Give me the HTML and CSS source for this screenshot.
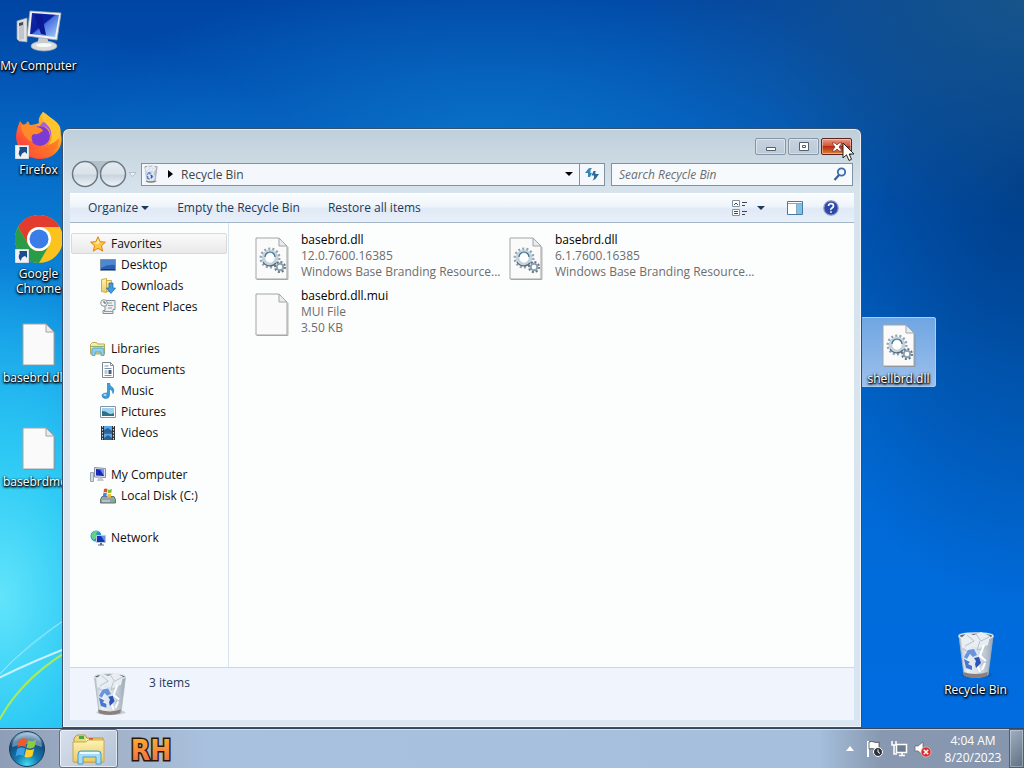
FILE: index.html
```
<!DOCTYPE html>
<html lang="en">
<head>
<meta charset="UTF-8" />
<meta name="viewport" content="width=device-width, initial-scale=1" />
<title>Recycle Bin</title>
<link rel="stylesheet" href="styles.css">
</head>
<body>

  <svg class="sprite" aria-hidden="true">
    <defs>
      <linearGradient id="gScreen" x1="0" y1="0" x2="1" y2="1">
        <stop offset="0" stop-color="#1029a8"/><stop offset=".45" stop-color="#0a1fa0"/><stop offset=".5" stop-color="#4a74e0"/><stop offset="1" stop-color="#a8d0ff"/>
      </linearGradient>
      <linearGradient id="gFox" x1="1" y1="0" x2="0" y2="1">
        <stop offset="0" stop-color="#fff04a"/><stop offset=".4" stop-color="#ff9a1e"/><stop offset=".75" stop-color="#ff4a3a"/><stop offset="1" stop-color="#f0186a"/>
      </linearGradient>
      <linearGradient id="gBin" x1="0" y1="0" x2="1" y2="0">
        <stop offset="0" stop-color="#b4bec8"/><stop offset=".25" stop-color="#eaf1f7"/><stop offset=".65" stop-color="#d0dae4"/><stop offset="1" stop-color="#98a6b4"/>
      </linearGradient>
      <linearGradient id="gFolder" x1="0" y1="0" x2="0" y2="1">
        <stop offset="0" stop-color="#fdf3b4"/><stop offset="1" stop-color="#ebcb60"/>
      </linearGradient>
      <linearGradient id="gLogo" x1="0" y1="0" x2="0" y2="1">
        <stop offset="0" stop-color="#ffb62c"/><stop offset="1" stop-color="#f0604a"/>
      </linearGradient>
      <linearGradient id="gCircle" x1="0" y1="0" x2="0" y2="1">
        <stop offset="0" stop-color="#e4ebf0"/><stop offset=".5" stop-color="#d9e2ea"/><stop offset=".55" stop-color="#c8d3dd"/><stop offset="1" stop-color="#f0f5f9"/>
      </linearGradient>
      <radialGradient id="gOrb" cx=".5" cy=".95" r=".95">
        <stop offset="0" stop-color="#3ee0f4"/><stop offset=".35" stop-color="#147cae"/><stop offset=".75" stop-color="#124a7c"/><stop offset="1" stop-color="#9ec4dc"/>
      </radialGradient>
    </defs>

    <symbol id="computer" viewBox="0 0 48 48">
      <path d="M2 14l10-3v24L4 34l-2-2z" fill="#dfe2e4" stroke="#9aa0a8" stroke-width=".7"/>
      <path d="M4 16l5-2v18l-5 1z" fill="#c2c6ca"/>
      <path d="M4 16l4-1v3l-4 1z" fill="#444c54"/>
      <ellipse cx="29" cy="39" rx="13" ry="5" fill="#d8dcde" stroke="#9da5ab" stroke-width=".7"/>
      <path d="M24 29h8l2 9q-6 3-12 0z" fill="#c6ccd0"/>
      <path d="M15 4l31 2-4 27-30-4z" fill="#f0f2f3" stroke="#a0a8b0" stroke-width=".8"/>
      <path d="M17 6l27 2-4 22-25-3z" fill="url(#gScreen)"/>
      <path d="M19 7l8 1 4 20-5-1z" fill="#0a1a94"/>
      <ellipse cx="29" cy="38" rx="8" ry="2" fill="#f8fafa"/>
    </symbol>

    <symbol id="shortcut" viewBox="0 0 14 14">
      <path d="M0 0h14v14H0z" fill="#eef2f6" stroke="#9aa8b8" stroke-width=".6"/>
      <path d="M5 2h7v7l-2-2q-4 1-4 5-4-3-1-8L4 3z" fill="#1b4f8c"/>
    </symbol>

    <symbol id="firefox" viewBox="0 0 48 48">
      <path d="M28 1c7 4 10 9 12 13 7 7 8 15 5 22C41 44 34 48 25 48 12 48 2 39 1 26 1 20 3 15 5 10l4 5 4-5 2 4c3 0 6-1 9-2-1-4 1-8 4-11z" fill="url(#gFox)"/>
      <circle cx="25" cy="25" r="10" fill="#7b3bd4"/>
      <path d="M24 16c6-3 13 3 11 10 4-7-1-14-7-15z" fill="#a05cf0"/>
      <path d="M6 14c6-2 10 0 14 2 4 0 7 1 8 4-3 1-4 4-9 3-3 1-3 5-1 8-6-2-12-8-12-17z" fill="#ff8a2a"/>
      <path d="M2 28c5 11 21 14 31 5 6-5 6-13 3-19 10 8 10 19 3 26C31 50 5 51 2 28z" fill="#ff6a2c" opacity=".6"/>
      <path d="M28 1c-3 6 2 10 6 15 4 6 4 13-1 18 9-3 15-8 12-18-2-6-10-9-17-15z" fill="#ffc42e"/>
      <use href="#shortcut" x="0" y="34" width="14" height="14"/>
    </symbol>

    <symbol id="chrome" viewBox="0 0 48 48">
      <circle cx="24" cy="24" r="24" fill="#fcc31e"/>
      <path d="M3.200 12A24 24 0 0 1 44.800 12H24A12 12 0 0 0 13.600 30z" fill="#e33b2e"/>
      <path d="M3.200 12A24 24 0 0 0 24 48L34.400 30A12 12 0 0 1 13.600 30z" fill="#2a9c48"/>
      <circle cx="24" cy="24" r="12" fill="#fff"/>
      <circle cx="24" cy="24" r="9.500" fill="#3b7de8"/>
      <use href="#shortcut" x="0" y="34" width="14" height="14"/>
    </symbol>

    <symbol id="file" viewBox="0 0 34 44">
      <path d="M1 1h23l8 8v33H1z" fill="#fafafa" stroke="#a4a4a4"/>
      <path d="M2 42.500h31V10" fill="none" stroke="#8c8c8c" opacity=".6"/>
      <path d="M24 1v8h8z" fill="#e8ecee" stroke="#a4a4a4"/>
    </symbol>

    <symbol id="gearfile" viewBox="0 0 34 44">
      <use href="#file" width="34" height="44"/>
      <circle cx="15" cy="21" r="9" fill="none" stroke="#93a3b0" stroke-width="3" stroke-dasharray="2 2.040"/>
      <circle cx="15" cy="21" r="6.500" fill="#fff" stroke="#c4d2dc" stroke-width="3.600"/>
      <path d="M8 25a8 8 0 0 0 13 1" fill="none" stroke="#56697a" stroke-width="1.300"/>
      <path d="M10 20a5 5 0 0 1 10 0" fill="none" stroke="#3b7492" stroke-width="1.200"/>
      <circle cx="25" cy="30" r="5" fill="none" stroke="#5f7484" stroke-width="2" stroke-dasharray="2 1.900"/>
      <circle cx="25" cy="30" r="3.300" fill="#fff" stroke="#8ba0b0" stroke-width="2"/>
    </symbol>

    <symbol id="bin" viewBox="0 0 40 48">
      <ellipse cx="21" cy="44" rx="16" ry="3" fill="#333" opacity=".2"/>
      <path d="M3 5h34l-5 39q-12 5-24 0z" fill="url(#gBin)" stroke="#a7b3bf" stroke-width=".8"/>
      <path d="M7 41q13 4 25 0l-1 4q-12 4-23 0z" fill="#8c817a"/>
      <ellipse cx="20" cy="5" rx="17" ry="3" fill="#5c6670" stroke="#dce3ea" stroke-width="1.500"/>
      <path d="M5 7l6-5 7 2 7-3 9 4-2 9-9 3-9-2-8 2z" fill="#e9eef2"/>
      <path d="M11 4l7 6-9 5M20 3l5 7 8-4M24 10l-3 9 10-2M26 22l5 7-6 5M7 18l6 3" fill="none" stroke="#b6c0c9"/>
      <path d="M28 14l-4 11 6 5M20 31l4 10M29 32l-3 7" fill="none" stroke="#fff" stroke-width="2"/>
      <path d="M12 19l6-1 3 6-4 2-3-3-3 5-3-2z" fill="#6b94dc"/>
      <path d="M18 27l5-1 2 6-5 5-1-4 1-3z" fill="#2c55bc"/>
      <path d="M8 28l6 3-2 2 4 2v4l-6-2z" fill="#4a76d0"/>
    </symbol>

    <symbol id="star" viewBox="0 0 16 16">
      <path d="M8 .8l2.200 4.900 5.200.5-4 3.600 1.300 5.300L8 12.300l-4.700 2.800 1.300-5.300-4-3.600 5.200-.5z" fill="#ffc843" stroke="#d98216"/>
      <path d="M8 3l1.500 3.600L8 8 4 7l2.500-.5z" fill="#fff0a8"/>
    </symbol>
    <symbol id="desktop" viewBox="0 0 16 16">
      <path d="M.5 2.500h15v11H.5z" fill="#2860b4" stroke="#7e92aa"/>
      <path d="M1 3h14v5Q8 7 1 11z" fill="#4f88d0"/><path d="M1 12h14v1H1z" fill="#16386c"/>
    </symbol>
    <symbol id="downloads" viewBox="0 0 16 16">
      <path d="M1.500 1.500l5-1v14l-5-1zM6.500 2.500h5v11h-5z" fill="url(#gFolder)" stroke="#d0ab48"/>
      <path d="M9 5h4v5h2.500L11 15.500 6.500 10H9z" fill="#3c9de0" stroke="#1c68a8" stroke-width=".7"/>
    </symbol>
    <symbol id="recent" viewBox="0 0 16 16">
      <path d="M5 1.500h10v9h-2v4H3v-3h2z" fill="#eceef0" stroke="#82909c"/>
      <path d="M7 4h5M8 6.500h5M8 9h4M4 12.500h9" stroke="#8ba0b0"/>
      <circle cx="4" cy="4" r="3.300" fill="#f5f6f7" stroke="#89949c"/><path d="M4 2v2h2" fill="none" stroke="#555"/>
    </symbol>
    <symbol id="libraries" viewBox="0 0 16 16">
      <path d="M.5 3.500l2-2h4l1 1.500h7v10H.5z" fill="url(#gFolder)" stroke="#b9a755"/>
      <path d="M1 5.500h14" stroke="#89b66e"/>
      <path d="M2 14.500V9q0-2 2-2h8q2 0 2 2v5.500h-3V11H5v3.500z" fill="#8fd0ee" stroke="#4a9cc4" stroke-width=".8"/>
    </symbol>
    <symbol id="documents" viewBox="0 0 16 16">
      <path d="M2.500.5h8l3 3v12h-11z" fill="#fff" stroke="#7c8894"/>
      <path d="M10.500.5v3h3M4.500 4h4M4.500 6.500h7M4.500 9h3M4.500 11h3M4.500 13.500h7" fill="none" stroke="#8090a0"/>
      <path d="M8.500 8h3v4h-3z" fill="#3d5f88"/>
    </symbol>
    <symbol id="music" viewBox="0 0 16 16">
      <path d="M7.500 0h2q0 3 3 4.500 2.500 2.500.5 6 0-3.500-3.500-4.500V12q0 3.500-4 3.500-3.500-.5-3.500-3T7.500 10z" fill="#3d9cda" stroke="#2274ac" stroke-width=".6"/>
      <ellipse cx="5" cy="12" rx="1.500" ry="1" fill="#b2def8"/>
    </symbol>
    <symbol id="pictures" viewBox="0 0 16 16">
      <path d="M.5 2.500h15v11H.5z" fill="#fff" stroke="#8296a8"/>
      <path d="M2 4h12v8H2z" fill="#9bd2ee"/><path d="M2 7q4 0 6 2t6 0v3H2z" fill="#2e7184"/>
    </symbol>
    <symbol id="videos" viewBox="0 0 16 16">
      <path d="M1 1h14v14H1z" fill="#2e3338"/><path d="M4 1h8v6.500H4zM4 8.500h8V15H4z" fill="#5ba6e6"/>
      <path d="M4 5l4-2 4 3v1.500H4zM4 13l4-3 4 3v2H4z" fill="#2b5f98"/>
      <path d="M2.500 1v14M13.500 1v14" stroke="#dfe5ea" stroke-dasharray="1.500 1.500"/>
    </symbol>
    <symbol id="pc" viewBox="0 0 16 16">
      <path d="M.5 5.500h3v9h-3z" fill="#d4dadf" stroke="#98a2ac"/>
      <path d="M4.500.5l11 1v9l-11-.5z" fill="#dbe0ee" stroke="#8890b0"/>
      <path d="M6 2l8 .7V9L6 8.500z" fill="#1728b4"/><path d="M10 2.500l4 .2V9z" fill="#6f92ec"/>
      <path d="M8 10.500h4l2 3.500H7z" fill="#c6ccd2"/>
    </symbol>
    <symbol id="disk" viewBox="0 0 16 16">
      <path d="M2 8.500h12l1.500 3v3.500H.5v-3.500z" fill="#96a2a8" stroke="#637078"/>
      <path d="M2 13h8" stroke="#d6e0e4"/><path d="M12 12h2v1.500h-2z" fill="#4fd04f"/>
      <path d="M4 1q2-1 3.500 0L7 4.500q-2-1-3.500 0z" fill="#e65228"/><path d="M8.200 1.400Q10 2 12 1l-.6 3.500q-2 1-3.700.3z" fill="#80bd34"/>
      <path d="M3.300 5.300q2-1 3.500 0L6.300 9q-2-1-3.600 0z" fill="#3c88dc"/><path d="M7.600 5.600q1.700.8 3.700-.2L10.800 9q-2 1-3.700.3z" fill="#f8bd28"/>
    </symbol>
    <symbol id="network" viewBox="0 0 16 16">
      <circle cx="6" cy="6" r="5.500" fill="#2696d6"/><path d="M2 3q3-3 6-2L6 4l2 2-4 4q-4-3-2-7z" fill="#6ad084"/>
      <path d="M6.500 5.500h9v7h-9z" fill="#1236b4" stroke="#bcc8e0"/><path d="M11 6h4v6z" fill="#668ee8"/>
      <path d="M10 13h2v1.500h2v1H8v-1h2z" fill="#5a6c84"/>
    </symbol>

    <symbol id="explorer" viewBox="0 0 34 32">
      <path d="M2 5l3-3h8l2 3h16v24H2z" fill="#f0d778" stroke="#b99840"/>
      <path d="M7 3h5v3H7z" fill="#46a84a"/><path d="M14 6h7v3h-7z" fill="#fff"/><path d="M17 5h4v2h-4z" fill="#d85a38"/><path d="M24 7h5v2h-5z" fill="#3f78cc"/>
      <path d="M1 9h13l2-2h16v22H1z" fill="url(#gFolder)" stroke="#c9a84c"/>
      <path d="M6 31V21q0-3 3-3h17q3 0 3 3v10h-5v-7H11v7z" fill="#a5dcf4" stroke="#4a9cc8"/>
      <path d="M8 20h19" stroke="#e8faff" stroke-width="2"/>
    </symbol>

    <symbol id="orb" viewBox="0 0 38 38">
      <circle cx="19" cy="19" r="17.500" fill="url(#gOrb)" stroke="#183c60"/>
      <path d="M4 17Q5 4 19 3t15 14q-14-6-30 0z" fill="#fff" opacity=".35"/>
      <path d="M11 10q4-3 8-.5L17.500 17q-4-2-8 .5z" fill="#f0592a"/>
      <path d="M20.300 10.200q4 2.200 8-.4L26.500 17q-4 2.500-8 .5z" fill="#8bcb3c"/>
      <path d="M9.200 19q4-2.500 8-.5L15.500 26q-4-2-8 .5z" fill="#3aa0e8"/>
      <path d="M18.200 19q4 2.200 8-.3L24.400 26q-4 2.800-8 .7z" fill="#ffcd2c"/>
    </symbol>
  </svg>

  <main class="desktop">
    <svg class="light" viewBox="0 0 120 140" aria-hidden="true">
      <path d="M-5 92Q30 74 80 55" stroke="#fff" stroke-width="2" opacity=".7"/>
      <path d="M-5 92Q25 55 80 22" stroke="#fff" opacity=".4"/>
      <path d="M-5 90Q20 64 70 28" stroke="#fff" opacity=".25"/>
      <path d="M-5 140Q20 88 80 56" stroke="#a6ec5a" stroke-width="2"/>
    </svg>

    <ul class="icons">
      <li class="shortcut"><svg><use href="#computer"/></svg><span>My Computer</span></li>
      <li class="shortcut"><svg><use href="#firefox"/></svg><span>Firefox</span></li>
      <li class="shortcut"><svg><use href="#chrome"/></svg><span>Google Chrome</span></li>
      <li class="shortcut"><svg class="doc"><use href="#file"/></svg><span class="long">basebrd.dll</span></li>
      <li class="shortcut"><svg class="doc"><use href="#file"/></svg><span class="long">basebrdmc</span></li>
    </ul>
    <div class="shortcut selected"><svg class="doc"><use href="#gearfile"/></svg><span>shellbrd.dll</span></div>
    <div class="shortcut trash"><svg><use href="#bin"/></svg><span>Recycle Bin</span></div>

    <section class="window" aria-label="Recycle Bin">
      <header class="titlebar">
        <button type="button" aria-label="Minimize"><svg viewBox="0 0 12 12"><path d="M1.500 6.500h9v3h-9z" fill="#fff" stroke="#54606e"/></svg></button>
        <button type="button" aria-label="Maximize"><svg viewBox="0 0 12 12"><path d="M1.500 1.500h9v8h-9zM4.500 4.500h3v2h-3z" fill="#fff" stroke="#54606e"/></svg></button>
        <button type="button" class="close" aria-label="Close"><svg viewBox="0 0 12 12"><path d="M1 2h3l2 2 2-2h3L8 6l3 4H8L6 8l-2 2H1l3-4z" fill="#fff" stroke="#6a3028" stroke-width=".7"/></svg></button>
      </header>

      <div class="navbar">
        <div class="history">
          <svg viewBox="0 0 66 28" aria-hidden="true">
            <path d="M14 1h28v9q-14 6-28 0z" fill="#b3bfc9"/>
            <circle cx="14" cy="14" r="12.500" fill="url(#gCircle)" stroke="#6c7884" stroke-width="1.500"/>
            <circle cx="42" cy="14" r="12.500" fill="url(#gCircle)" stroke="#6c7884" stroke-width="1.500"/>
            <path d="M58 12.500h7l-3.500 4z" fill="#eef3f8" stroke="#a7b5c4" stroke-width=".8"/>
          </svg>
        </div>
        <div class="address">
          <svg class="small"><use href="#bin"/></svg>
          <svg class="arrow" viewBox="0 0 5 8"><path d="M0 0l5 4-5 4z"/></svg>
          <span>Recycle Bin</span>
          <button type="button" class="drop" aria-label="Previous locations"><svg viewBox="0 0 8 4"><path d="M0 0h8L4 4z"/></svg></button>
          <button type="button" class="refresh" aria-label="Refresh">
            <svg viewBox="0 0 16 16"><path d="M4 11V7H1l3.500-4.500L6 2h2L6.500 4v3H8l-2 4z" fill="#3487b4"/><path d="M9.500 5h2.500l-1 2 1 1h3l-3.500 5-3 1.500L10 12V9.500H7.500z" fill="#2c6c9c"/></svg>
          </button>
        </div>
        <form class="search">
          <input type="text" aria-label="Search Recycle Bin" placeholder="Search Recycle Bin">
          <svg viewBox="0 0 14 14" aria-hidden="true"><circle cx="8.500" cy="5" r="3.700" fill="#f2f8ff" stroke="#3c6cb0" stroke-width="1.800"/><path d="M6 8l-4.500 5" stroke="#3b5f98" stroke-width="2.200"/></svg>
        </form>
      </div>

      <div class="toolbar">
        <button type="button">Organize <svg class="caret" viewBox="0 0 8 4"><path d="M0 0h8L4 4z"/></svg></button>
        <button type="button">Empty the Recycle Bin</button>
        <button type="button">Restore all items</button>
        <div class="tools">
          <button type="button" aria-label="Change your view">
            <svg class="tool" viewBox="0 0 16 16"><path d="M.5.500h7v6h-7zM.5 9.500h7v6h-7z" fill="#fff" stroke="#8492a0"/><path d="M2 5l2-2 2 2M2 11.500h4M2 13.500h4M10 2.500h5M10 5.500h3M10 11.500h5M10 14.500h3" fill="none" stroke="#34485c"/></svg>
            <svg class="caret" viewBox="0 0 8 4"><path d="M0 0h8L4 4z"/></svg>
          </button>
          <button type="button" aria-label="Show the preview pane">
            <svg class="tool" viewBox="0 0 16 16"><path d="M.5 1.500h15v13H.5z" fill="#fff" stroke="#4878a4"/><path d="M10 4h5v10h-5z" fill="#80c2e4"/><path d="M1 3.500h14M9.500 4v10" stroke="#8aa6c0"/></svg>
          </button>
          <button type="button" aria-label="Get help">
            <svg class="tool" viewBox="0 0 16 16"><circle cx="8" cy="8" r="7.200" fill="#2c48a8" stroke="#8c98c4" stroke-width="1.200"/><path d="M5.500 6q0-2.300 2.500-2.300T10.500 6Q10.500 7 9 8T8 10M8 11.300v1.500" fill="none" stroke="#fff" stroke-width="1.700"/></svg>
          </button>
        </div>
      </div>

      <div class="content">
        <nav class="tree">
          <ul>
            <li><a href="#" class="current"><svg><use href="#star"/></svg>Favorites</a></li>
            <li><a href="#" class="sub"><svg><use href="#desktop"/></svg>Desktop</a></li>
            <li><a href="#" class="sub"><svg><use href="#downloads"/></svg>Downloads</a></li>
            <li><a href="#" class="sub"><svg><use href="#recent"/></svg>Recent Places</a></li>
          </ul>
          <ul>
            <li><a href="#"><svg><use href="#libraries"/></svg>Libraries</a></li>
            <li><a href="#" class="sub"><svg><use href="#documents"/></svg>Documents</a></li>
            <li><a href="#" class="sub"><svg><use href="#music"/></svg>Music</a></li>
            <li><a href="#" class="sub"><svg><use href="#pictures"/></svg>Pictures</a></li>
            <li><a href="#" class="sub"><svg><use href="#videos"/></svg>Videos</a></li>
          </ul>
          <ul>
            <li><a href="#"><svg><use href="#pc"/></svg>My Computer</a></li>
            <li><a href="#" class="sub"><svg><use href="#disk"/></svg>Local Disk (C:)</a></li>
          </ul>
          <ul>
            <li><a href="#"><svg><use href="#network"/></svg>Network</a></li>
          </ul>
        </nav>
        <ul class="files">
          <li><svg><use href="#gearfile"/></svg><div><b>basebrd.dll</b><p>12.0.7600.16385</p><p>Windows Base Branding Resource...</p></div></li>
          <li><svg><use href="#gearfile"/></svg><div><b>basebrd.dll</b><p>6.1.7600.16385</p><p>Windows Base Branding Resource...</p></div></li>
          <li><svg><use href="#file"/></svg><div><b>basebrd.dll.mui</b><p>MUI File</p><p>3.50 KB</p></div></li>
        </ul>
      </div>

      <footer class="details">
        <svg><use href="#bin"/></svg>
        <span>3 items</span>
      </footer>
    </section>

    <svg class="cursor" viewBox="0 0 13 20" aria-hidden="true"><path d="M1 1v15l3.500-3.200L7 18.500l2.500-1.200L7.200 12H12z" fill="#fff" stroke="#222"/></svg>
  </main>

  <footer class="taskbar">
    <button type="button" class="start" aria-label="Start"><svg><use href="#orb"/></svg></button>
    <button type="button" class="task" aria-label="Explorer"><svg><use href="#explorer"/></svg></button>
    <button type="button" class="pinned"><svg viewBox="0 0 48 38"><text x="24" y="30" text-anchor="middle">RH</text></svg></button>
    <div class="tray">
      <svg class="up" viewBox="0 0 8 5"><path d="M0 5l4-5 4 5z" fill="#fff"/></svg>
      <svg viewBox="0 0 18 18"><path d="M2 1v16" stroke="#fff" stroke-width="2"/><path d="M3 2q3-1 5 0t5 0v7q-3 1-5 0T3 9z" fill="#fff" stroke="#333" stroke-width=".7"/><circle cx="12" cy="12" r="4.500" fill="#30343a" stroke="#fff"/><path d="M12 9.500V12l2 1.500" fill="none" stroke="#fff"/></svg>
      <svg viewBox="0 0 18 18"><path d="M6.500 4.500h10v8h-10zM9 15.500h6M12 12.500v3" fill="#6c7c8e" stroke="#fff" stroke-width="1.500"/><path d="M2 1v4h4V1M4 5v9h3" fill="none" stroke="#fff" stroke-width="1.500"/></svg>
      <svg viewBox="0 0 18 18"><path d="M1 6h3l5-4v13l-5-4H1z" fill="#fff" stroke="#59636e" stroke-width=".7"/><circle cx="12" cy="12" r="5" fill="#d82c2c" stroke="#f3c0c0" stroke-width=".7"/><path d="M9.800 9.800l4.400 4.400M14.200 9.800l-4.400 4.400" stroke="#fff" stroke-width="1.600"/></svg>
      <div class="clock"><time>4:04 AM</time><time>8/20/2023</time></div>
    </div>
    <button type="button" class="peek" aria-label="Show desktop"></button>
  </footer>

</body>
</html>
```
FILE: styles.css
```
* {
  box-sizing: border-box;
}

body, html {
  margin: 0;
  padding: 0;
  height: 100%;
  overflow: hidden;
  font-family: "Open Sans", "Noto Sans", sans-serif;
  font-size: 12px;
}
body {
  display: flex;
  flex-direction: column;
}
ul {
  list-style: none;
  margin: 0;
  padding: 0;
}
button, input {
  font: inherit;
  color: inherit;
}
button {
  padding: 0;
  border: none;
  background: none;
}
svg {
  display: block;
  flex: none;
}
.sprite {
  position: absolute;
  width: 0;
  height: 0;
}

/* desktop */
.desktop {
  flex: 1;
  position: relative;
  overflow: hidden;
  background:
    radial-gradient(ellipse 210px 330px at 0 82%, #62e4fb 0, #2fcbf5 40%, rgba(16, 160, 235, 0) 100%),
    radial-gradient(ellipse 520px 560px at 0 80%, #18aef0 0, rgba(0, 130, 225, 0) 100%),
    radial-gradient(ellipse 400px 220px at 100% 0, rgba(30, 90, 136, .75) 0, rgba(0, 66, 140, 0) 100%),
    radial-gradient(ellipse 420px 180px at 48% 20%, rgba(12, 122, 204, .8) 0, rgba(0, 100, 200, 0) 100%),
    radial-gradient(ellipse 260px 420px at 100% 25%, #003f8a 0, rgba(0, 70, 160, 0) 100%),
    linear-gradient(to bottom, #0045a4 0, #0057bb 25%, #006ad2 50%, #006ce0 100%);
}
.light {
  position: absolute;
  left: 0;
  bottom: 0;
  width: 120px;
  height: 140px;
  fill: none;
}
.icons {
  display: inline-block;
}
.icons .shortcut {
  height: 104px;
}
.shortcut {
  display: flex;
  flex-direction: column;
  align-items: center;
  gap: 3px;
  width: 77px;
  padding-top: 7px;
  color: #fff;
  line-height: 15px;
  text-align: center;
  text-shadow: 0 1px 2px #000, 1px 1px 2px #000, 0 1px 3px #000;
}
.shortcut svg {
  width: 48px;
  height: 48px;
}
.shortcut svg.doc {
  padding-top: 4px;
}
.shortcut .long {
  align-self: flex-start;
  padding-left: 3px;
}
.shortcut.selected {
  position: absolute;
  right: 88px;
  top: 317px;
  width: 75px;
  height: 70px;
  padding-top: 2px;
  background: linear-gradient(#6fa6e2, #9cc0ec);
  border: 1px solid #a9cdf4;
  border-radius: 2px;
}
.shortcut.trash {
  position: absolute;
  right: 10px;
  bottom: 31px;
}

/* explorer window */
.window {
  position: absolute;
  left: 62px;
  right: 162px;
  top: 128px;
  bottom: 0;
  display: flex;
  flex-direction: column;
  padding: 0 7px 7px;
  border: 1px solid #35506e;
  border-radius: 7px 7px 0 0;
  box-shadow: inset 0 0 0 1px rgba(255, 255, 255, .6);
  background: linear-gradient(to bottom, #bfcfda 0, #d7e3ec 60px, #d9e5f0 100%);
}
.titlebar {
  display: flex;
  justify-content: flex-end;
  gap: 2px;
  height: 32px;
  padding: 9px 2px 0;
}
.titlebar button {
  display: flex;
  align-items: center;
  justify-content: center;
  width: 31px;
  height: 17px;
  border: 1px solid #8695a6;
  border-radius: 2px;
  background: linear-gradient(#c6d3de, #bccad8);
  box-shadow: inset 0 0 0 1px rgba(255, 255, 255, .4);
}
.titlebar svg {
  width: 12px;
  height: 12px;
}
.titlebar .close {
  border-color: #5c2420;
  background: linear-gradient(#e89a86 0, #d2583c 45%, #b82c10 50%, #e08030 100%);
}

.navbar {
  display: flex;
  align-items: center;
  height: 26px;
  padding: 0 1px;
}
.history {
  width: 70px;
}
.history svg {
  width: 66px;
  height: 28px;
}
.address {
  flex: 1;
  display: flex;
  align-items: center;
  height: 23px;
  margin-right: 6px;
  padding-left: 1px;
  border: 1px solid #8192a5;
  background: #f4f8fc;
  color: #444;
}
.address .small {
  width: 16px;
  height: 18px;
}
.address .arrow {
  width: 5px;
  height: 8px;
  margin: 0 8px 0 9px;
}
.address .drop {
  margin-left: auto;
  padding: 6px;
}
.drop svg, .caret {
  width: 8px;
  height: 4px;
}
.address .refresh {
  align-self: stretch;
  padding: 0 4px;
  border-left: 1px solid #8192a5;
}
.refresh svg {
  width: 16px;
  height: 16px;
}
.search {
  display: flex;
  align-items: center;
  width: 242px;
  height: 23px;
  padding: 0 5px 0 7px;
  border: 1px solid #8192a5;
  background: #f7fafd;
}
.search input {
  flex: 1;
  min-width: 0;
  padding: 0;
  border: none;
  outline: none;
  background: none;
}
.search input::placeholder {
  color: #6d6d6d;
  font-style: italic;
}
.search svg {
  width: 14px;
  height: 14px;
}

.toolbar {
  display: flex;
  align-items: center;
  gap: 28px;
  height: 30px;
  margin-top: 6px;
  padding: 0 15px 0 18px;
  border: solid #a5b5c8;
  border-width: 0 0 1px;
  box-shadow: inset 0 1px #fff;
  background: linear-gradient(#fafcfe 0, #f0f5fb 45%, #e0e9f6 55%, #e8f0f9 100%);
  color: #1e395b;
}
.toolbar button {
  display: flex;
  align-items: center;
  gap: 3px;
}
.caret {
  fill: #1e395b;
}
.tools {
  display: flex;
  gap: 22px;
  margin-left: auto;
}
.tools button:first-child {
  gap: 9px;
}
.tools .tool {
  width: 16px;
  height: 16px;
}
.tools button:last-child {
  margin-left: -2px;
}

.content {
  flex: 1;
  display: flex;
  min-height: 0;
  background: #fcfdfd;
}
.tree {
  width: 159px;
  padding: 10px 1px;
  border-right: 1px solid #d9e4f1;
}
.tree ul {
  margin-bottom: 21px;
}
.tree a {
  display: flex;
  align-items: center;
  gap: 5px;
  height: 21px;
  padding-left: 18px;
  border: 1px solid transparent;
  border-radius: 2px;
  color: #111;
  text-decoration: none;
}
.tree a.sub {
  padding-left: 28px;
}
.tree a.current {
  border-color: #d9d9d9;
  background: linear-gradient(#fafafa, #e9e9e9);
}
.tree svg {
  width: 16px;
  height: 16px;
}
.files {
  flex: 1;
  display: grid;
  grid-template-columns: repeat(auto-fill, 246px);
  grid-auto-rows: 56px;
  column-gap: 8px;
  padding: 9px 0 0 26px;
}
.files li {
  display: flex;
  gap: 12px;
  line-height: 16px;
  white-space: nowrap;
}
.files svg {
  width: 34px;
  height: 44px;
  margin-top: 5px;
}
.files b {
  font-weight: normal;
  color: #000;
}
.files p {
  margin: 0;
  color: #6d6d6d;
}

.details {
  display: flex;
  gap: 19px;
  height: 53px;
  padding: 4px 20px;
  border-top: 1px solid #ccd7e6;
  background: #f0f4fd;
  color: #1e395b;
}
.details svg {
  width: 40px;
  height: 44px;
}
.details span {
  padding-top: 2px;
}

/* mouse pointer */
.cursor {
  position: absolute;
  right: 169px;
  top: 142px;
  width: 13px;
  height: 20px;
}

/* taskbar */
.taskbar {
  display: flex;
  align-items: stretch;
  height: 40px;
  border-top: 1px solid #34475f;
  box-shadow: inset 0 1px rgba(255, 255, 255, .5);
  background: linear-gradient(to right, #8d9eb6 0, #a2b3ca 12%, #a8c1de 20%, #a5bfdc 80%, #8898b0 86%, #8696ae 100%);
}
.start {
  padding: 0 8px;
}
.start svg {
  width: 38px;
  height: 38px;
}
.task {
  display: flex;
  align-items: center;
  justify-content: center;
  width: 59px;
  margin-left: 5px;
  border: 1px solid #5f7188;
  border-radius: 3px;
  background: linear-gradient(135deg, #d8e0ec, #b4c3d8);
  box-shadow: inset 0 0 0 1px rgba(255, 255, 255, .6);
}
.task svg {
  width: 34px;
  height: 32px;
}
.pinned {
  padding-left: 9px;
}
.pinned svg {
  width: 48px;
  height: 38px;
}
.pinned text {
  font-family: "DejaVu Sans Condensed", "Liberation Sans", sans-serif;
  font-size: 28px;
  font-weight: bold;
  fill: url(#gLogo);
  stroke: #2b1608;
  stroke-width: 3px;
  paint-order: stroke;
}
.tray {
  display: flex;
  align-items: center;
  gap: 6px;
  margin-left: auto;
  color: #fff;
}
.tray svg {
  width: 18px;
  height: 18px;
}
.tray svg.up {
  width: 8px;
  height: 5px;
  margin-right: 6px;
}
.clock {
  width: 66px;
  margin-left: 2px;
  line-height: 17px;
  text-align: center;
}
.clock time {
  display: block;
}
.peek {
  width: 15px;
  margin-left: 3px;
  border: 1px solid #4e5f76;
  box-shadow: inset 0 0 0 1px rgba(255, 255, 255, .3);
  background: linear-gradient(135deg, #a0aec0, #5f7084);
}
```
